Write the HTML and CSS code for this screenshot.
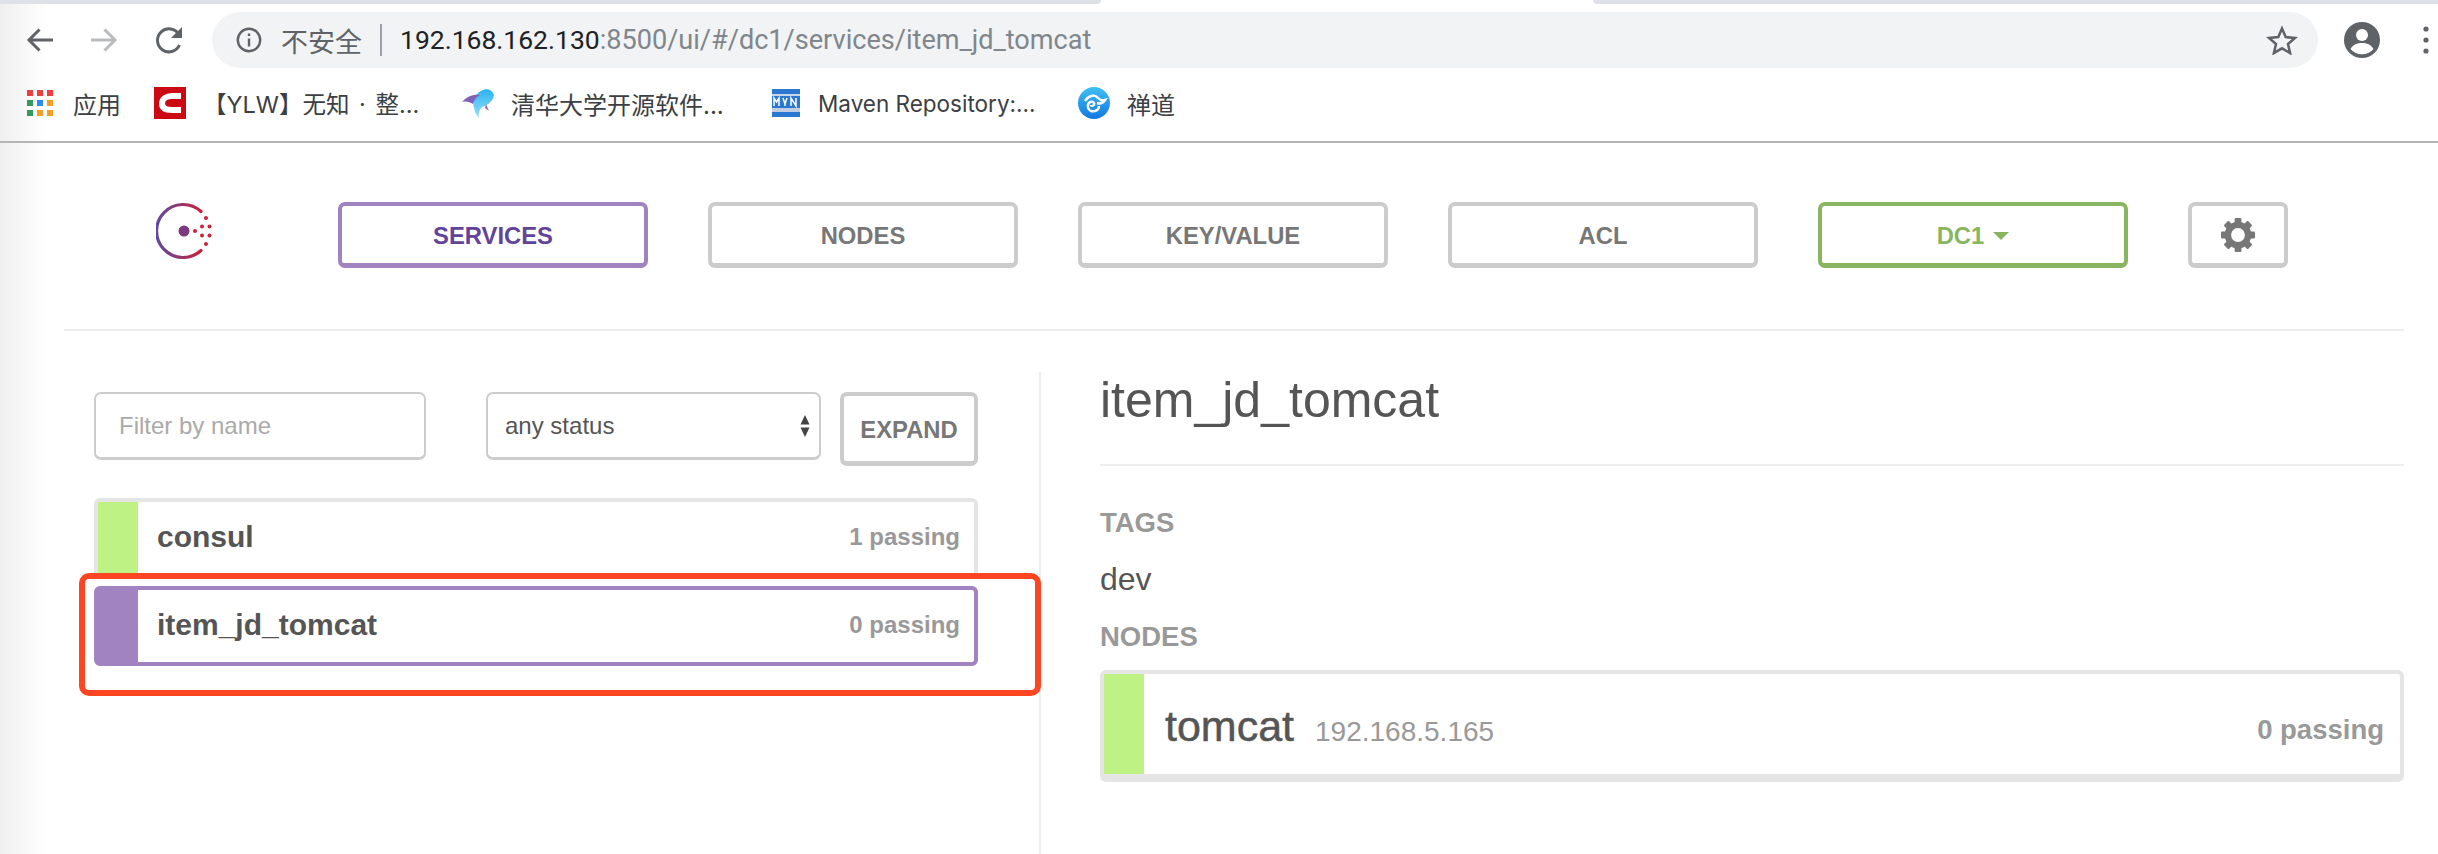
FILE: index.html
```html
<!DOCTYPE html>
<html lang="zh-CN">
<head>
<meta charset="utf-8">
<title>Consul</title>
<link rel="stylesheet" href="styles.css">
</head>
<body>
<div class="tabstrip"><span class="tab-left"></span><span class="tab-right"></span></div>
<div class="toolbar">
  <svg class="tb-icon" width="30" height="30" viewBox="0 0 30 30"><path d="M28 15H4M14.500 4.500 4 15l10.500 10.500" fill="none" stroke="#5f6368" stroke-width="3"/></svg>
  <svg class="tb-icon" width="30" height="30" viewBox="0 0 30 30"><path d="M2 15h24M15.500 4.500 26 15 15.500 25.500" fill="none" stroke="#b9bcbf" stroke-width="3"/></svg>
  <svg class="tb-icon" width="30" height="30" viewBox="0 0 30 30"><path d="M25.500 20a11.500 11.500 0 1 1-.6-10.500" fill="none" stroke="#5f6368" stroke-width="3"/><path d="M28 2v11H17z" fill="#5f6368"/></svg>
  <div class="omnibox">
    <svg class="info" width="26" height="26" viewBox="0 0 26 26"><circle cx="13" cy="13" r="11.200" fill="none" stroke="#5f6368" stroke-width="2.400"/><path d="M11.800 11.500h2.400v8h-2.400zM11.800 6.500h2.400v2.600h-2.400z" fill="#5f6368"/></svg>
    <span class="insecure">不安全</span>
    <span class="sep"></span>
    <span class="url"><b>192.168.162.130</b>:8500/ui/#/dc1/services/item_jd_tomcat</span>
    <svg class="star" width="32" height="30" viewBox="0 0 32 30"><path d="M16 3.500l3.700 8.600 9.300.8-7 6.100 2.100 9.100-8.100-4.800-8.100 4.800 2.100-9.100-7-6.100 9.300-.8z" fill="none" stroke="#5f6368" stroke-width="2.500"/></svg>
  </div>
  <svg class="avatar" width="36" height="36" viewBox="0 0 36 36"><circle cx="18" cy="18" r="18" fill="#5f6368"/><circle cx="18" cy="13" r="6" fill="#fff"/><path d="M6.500 27c2.500-4.500 7-6 11.500-6s9 1.500 11.500 6a15 15 0 0 1-23 0z" fill="#fff"/></svg>
  <svg class="dots" width="6" height="28" viewBox="0 0 6 28"><circle cx="3" cy="3" r="2.600" fill="#5f6368"/><circle cx="3" cy="14" r="2.600" fill="#5f6368"/><circle cx="3" cy="25" r="2.600" fill="#5f6368"/></svg>
</div>
<div class="bookmarks">
  <span class="bm bm-apps">
    <span class="apps">
      <i class="red"></i><i class="red"></i><i class="red"></i>
      <i class="green"></i><i class="blue"></i><i class="orange"></i>
      <i class="green"></i><i class="orange"></i><i class="orange"></i>
    </span>
    应用
  </span>
  <span class="bm bm-ylw">
    <svg width="32" height="32" viewBox="0 0 32 32"><rect width="32" height="32" fill="#cb0a14"/><path d="M27 9H18c-6 0-10 3-10 7.500S12 23 18 23h9" fill="none" stroke="#fff" stroke-width="6"/></svg>
    【YLW】无知 · 整...
  </span>
  <span class="bm bm-tsinghua">
    <svg width="32" height="32" viewBox="0 0 32 32"><defs><linearGradient id="fish" x1="0" y1="0" x2="0" y2="1"><stop offset="0" stop-color="#2ab3f0"/><stop offset="1" stop-color="#9adff8"/></linearGradient></defs><path d="M32 8c-2-6-8-7-13-4-6 3-9 10-7 17 1 4 2 7 5 10-1-4 0-8 3-11 6-2 11-6 12-12z" fill="url(#fish)"/><path d="M0 15c5-6 12-8 18-7-4 2-6 5-7 9-3-2-7-3-11-2z" fill="#7e62b8"/><path d="M24 17l3 7-4-3z" fill="#8e6cc0"/></svg>
    清华大学开源软件...
  </span>
  <span class="bm bm-maven">
    <svg width="28" height="28" viewBox="0 0 28 28"><rect width="28" height="5" fill="#2a78d2"/><rect y="5" width="28" height="2" fill="#c8d6ea"/><rect y="7" width="28" height="12" fill="#2a78d2"/><rect y="19" width="28" height="4" fill="#c2cee0"/><rect y="23" width="28" height="5" fill="#2a78d2"/><path d="M2 17V9l2.500 4L7 9v8M11 9l2 6 2-6M13 15v2M19 17V9l5 8V9" fill="none" stroke="#fff" stroke-width="1.500"/></svg>
    Maven Repository:...
  </span>
  <span class="bm bm-chandao">
    <svg width="32" height="32" viewBox="0 0 32 32"><defs><linearGradient id="cd" x1="0" y1="0" x2="0" y2="1"><stop offset="0" stop-color="#3fc0f4"/><stop offset="1" stop-color="#1377e0"/></linearGradient></defs><circle cx="16" cy="16" r="16" fill="url(#cd)"/><path d="M7 14c4-6 10-7 13-3 2 2 4 3 7 2-2 3-5 4-8 3M21 19c0 4-4 6-8 5-4-2-4-7-1-9 3-1 5 1 4 3-1 1-3 1-3 0" fill="none" stroke="#fff" stroke-width="2.400"/></svg>
    禅道
  </span>
</div>
<main class="page">
  <header class="nav">
    <svg class="logo" width="58" height="58" viewBox="0 0 58 58"><defs><linearGradient id="arc" x1="0" y1="0" x2="1" y2="0"><stop offset="0" stop-color="#5f4b9f"/><stop offset="1" stop-color="#c8203c"/></linearGradient></defs><path d="M45 9.500a26.500 26.500 0 1 0 0 39" fill="none" stroke="url(#arc)" stroke-width="3.200" stroke-linecap="round"/><circle cx="28" cy="29" r="5.500" fill="#7e3a80"/><g fill="#cb2139"><circle cx="39" cy="29" r="2"/><circle cx="50" cy="16" r="2"/><circle cx="46" cy="24.500" r="2"/><circle cx="53.500" cy="24.500" r="2"/><circle cx="46" cy="33.500" r="2"/><circle cx="53.500" cy="33.500" r="2"/><circle cx="50" cy="42" r="2"/></g></svg>
    <a class="btn btn-active">SERVICES</a>
    <a class="btn">NODES</a>
    <a class="btn">KEY/VALUE</a>
    <a class="btn">ACL</a>
    <a class="btn btn-dc">DC1<span class="caret"></span></a>
    <a class="btn btn-gear">
      <svg width="34" height="34" viewBox="0 0 32 32"><g fill="#777"><rect x="12.800" y="0" width="6.400" height="7" rx="1"/><rect x="12.800" y="0" width="6.400" height="7" rx="1" transform="rotate(45 16 16)"/><rect x="12.800" y="0" width="6.400" height="7" rx="1" transform="rotate(90 16 16)"/><rect x="12.800" y="0" width="6.400" height="7" rx="1" transform="rotate(135 16 16)"/><rect x="12.800" y="0" width="6.400" height="7" rx="1" transform="rotate(180 16 16)"/><rect x="12.800" y="0" width="6.400" height="7" rx="1" transform="rotate(225 16 16)"/><rect x="12.800" y="0" width="6.400" height="7" rx="1" transform="rotate(270 16 16)"/><rect x="12.800" y="0" width="6.400" height="7" rx="1" transform="rotate(315 16 16)"/></g><circle cx="16" cy="16" r="9.500" fill="none" stroke="#777" stroke-width="6"/></svg>
    </a>
  </header>
  <div class="columns">
    <section class="left">
      <div class="filters">
        <input class="filter" type="text" placeholder="Filter by name">
        <div class="select">any status
          <svg width="12" height="24" viewBox="0 0 12 24"><path d="M6 1l4.500 9.500h-9zM6 23l4.500-9.500h-9z" fill="#444"/></svg>
        </div>
        <a class="btn btn-expand">EXPAND</a>
      </div>
      <div class="card card-ok">
        <span class="bar"></span>
        <span class="name">consul</span>
        <span class="count">1 passing</span>
      </div>
      <div class="card card-sel">
        <span class="bar"></span>
        <span class="name">item_jd_tomcat</span>
        <span class="count">0 passing</span>
      </div>
    </section>
    <section class="right">
      <h1>item_jd_tomcat</h1>
      <h2 class="label label-tags">TAGS</h2>
      <p class="tag">dev</p>
      <h2 class="label">NODES</h2>
      <div class="node">
        <span class="bar"></span>
        <span class="node-name">tomcat</span>
        <span class="node-ip">192.168.5.165</span>
        <span class="count count-lg">0 passing</span>
      </div>
    </section>
  </div>
  <div class="callout"></div>
</main>
</body>
</html>
```
FILE: styles.css
```css
* { box-sizing: border-box; }
html, body { margin: 0; height: 100%; }
body {
  position: relative;
  width: 2438px;
  height: 854px;
  overflow: hidden;
  font-family: "Liberation Sans", Arial, sans-serif;
  background: linear-gradient(90deg, #efefef 0, #fff 46px);
}
.tabstrip { display: flex; justify-content: space-between; height: 12px; }
.tab-left, .tab-right { display: block; height: 4px; background: #dee1e6; }
.tab-left { width: 1101px; border-radius: 0 0 6px 0; }
.tab-right { width: 845px; border-radius: 0 0 0 6px; }

.toolbar { display: flex; align-items: center; height: 56px; padding-left: 25px; }
.tb-icon { margin-right: 34px; flex: none; }
.tb-icon:nth-child(2) { margin-right: 35px; }
.tb-icon:nth-child(3) { margin-right: 0; }
.omnibox {
  display: flex; align-items: center;
  width: 2106px; height: 56px; margin-left: 28px; padding: 0 20px 0 24px;
  background: #f1f3f4; border-radius: 28px;
}
.insecure { margin-left: 19px; font: 27px "Noto Sans CJK SC", sans-serif; color: #5f6368; }
.sep { width: 2px; height: 32px; margin: 0 18px; background: #9aa0a6; }
.url { flex: 1; font: 27.100px Roboto, sans-serif; color: #80868b; }
.url b { font-size: 26.500px; font-weight: 400; color: #202124; }
.avatar { margin-left: 26px; flex: none; }
.dots { margin-left: 43px; flex: none; }

.bookmarks { display: flex; height: 75px; padding: 13px 0 0 27px; border-bottom: 2px solid #b5b5b5; }
.bm {
  display: flex; align-items: center; height: 44px;
  font: 24px Inter, "Noto Sans CJK SC", sans-serif; color: #3c4043; white-space: nowrap;
}
.bm-apps { gap: 20px; width: 127px; }
.apps { display: grid; grid-template-columns: repeat(3, 6px); gap: 4px; }
.apps i { display: block; height: 6px; }
.red { background: #ef3e3e; }
.green { background: #34995a; }
.blue { background: #2b8cec; }
.orange { background: #f0a024; }
.bm-ylw { gap: 17px; width: 308px; word-spacing: 3px; font-size: 23.500px; }
.bm-tsinghua { gap: 17px; width: 310px; }
.bm-maven { gap: 18px; width: 306px; font-size: 22.500px; }
.bm-chandao { gap: 17px; }

.page { padding-top: 59px; }
.nav {
  display: flex; align-items: flex-start; gap: 60px;
  height: 129px; margin: 0 34px 0 64px; padding-left: 274px;
  border-bottom: 2px solid #eee;
  position: relative;
}
.logo { position: absolute; left: 92px; top: 0; }
.btn {
  display: flex; align-items: center; justify-content: center;
  width: 310px; height: 66px; padding-top: 2px;
  border: 4px solid #ccc; border-bottom-width: 5px; border-radius: 7px;
  font-size: 23.800px; font-weight: 700; color: #777;
}
.btn-active { border-color: #a083c0; color: #61449a; }
.btn-dc { border-color: #8ab560; color: #8ab560; }
.caret {
  width: 0; height: 0; margin-left: 9px; margin-top: 1px;
  border-left: 8px solid transparent; border-right: 8px solid transparent; border-top: 8px solid #8ab560;
}
.btn-gear { width: 100px; padding-top: 0; }

.columns { display: flex; }
.left { width: 1039px; padding: 61px 0 0 94px; }
.filters { display: flex; align-items: flex-start; height: 106px; }
.filter, .select {
  height: 68px; border: 2px solid #ccc; border-bottom-width: 3px; border-radius: 7px;
  font-family: "Liberation Sans", Arial, sans-serif; font-size: 24px;
}
.filter { width: 332px; padding: 0 23px; outline: none; background: transparent; }
.filter::placeholder { color: #aaa; opacity: 1; }
.select {
  display: flex; align-items: center; justify-content: space-between;
  width: 335px; margin-left: 60px; padding: 0 8px 0 17px; color: #555;
}
.btn-expand { width: 138px; height: 74px; margin-left: 19px; }

.card {
  display: flex; align-items: center; position: relative;
  width: 884px; height: 80px; margin-bottom: 8px; padding: 0 14px 3px 59px;
  border: 4px solid #e5e5e5; border-radius: 6px;
}
.card .bar { position: absolute; left: 0; top: 0; bottom: 0; width: 40px; background: #bef285; }
.card-sel { border-color: #a083c0; }
.card-sel .bar { background: #a083c0; }
.name { flex: 1; font-size: 30px; font-weight: 700; color: #555; }
.count { font-size: 24px; font-weight: 700; color: #999; }

.right { flex: 1; height: 482px; padding: 0 34px 0 59px; margin-top: 41px; border-left: 2px solid #eee; }
h1 {
  margin: 0; height: 94px;
  font-size: 50px; line-height: 56px; font-weight: 400; color: #555;
  border-bottom: 2px solid #eee;
}
.label { margin: 0; font-size: 27.500px; line-height: 32px; font-weight: 700; color: #999; }
.label-tags { margin-top: 41px; }
.tag { margin: 22px 0 24px; font-size: 32px; line-height: 36px; color: #555; }
.node {
  display: flex; align-items: baseline; position: relative;
  width: 1304px; height: 112px; margin-top: 17px; padding: 28px 16px 0 61px;
  border: 4px solid #e5e5e5; border-bottom-width: 8px; border-radius: 6px;
}
.node .bar { position: absolute; left: 0; top: 0; bottom: 0; width: 40px; background: #bef285; }
.node-name { font-size: 43px; color: #555; -webkit-text-stroke: .5px #555; }
.node-ip { flex: 1; margin-left: 21px; font-size: 28px; color: #999; }
.count-lg { align-self: flex-start; margin-top: 12px; font-size: 27.500px; }

.callout {
  position: absolute; left: 79px; top: 573px; width: 962px; height: 123px;
  border: 6px solid #fc4621; border-radius: 10px;
}
```
